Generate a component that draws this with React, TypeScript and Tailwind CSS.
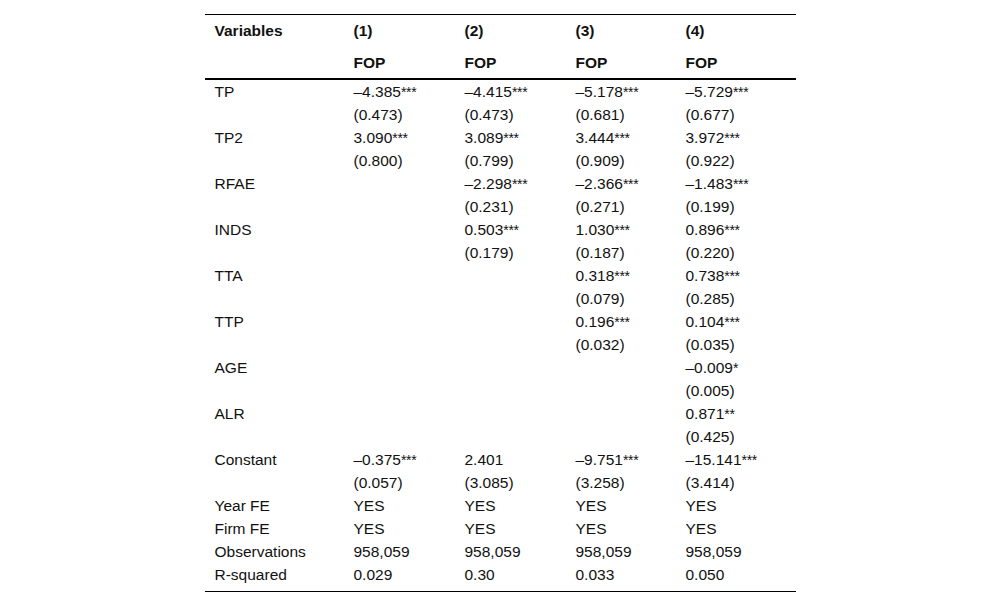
const rows: { label: string; cells: string[]; se?: string[] }[] = [
  { label: "TP", cells: ["–4.385***", "–4.415***", "–5.178***", "–5.729***"], se: ["(0.473)", "(0.473)", "(0.681)", "(0.677)"] },
  { label: "TP2", cells: ["3.090***", "3.089***", "3.444***", "3.972***"], se: ["(0.800)", "(0.799)", "(0.909)", "(0.922)"] },
  { label: "RFAE", cells: ["", "–2.298***", "–2.366***", "–1.483***"], se: ["", "(0.231)", "(0.271)", "(0.199)"] },
  { label: "INDS", cells: ["", "0.503***", "1.030***", "0.896***"], se: ["", "(0.179)", "(0.187)", "(0.220)"] },
  { label: "TTA", cells: ["", "", "0.318***", "0.738***"], se: ["", "", "(0.079)", "(0.285)"] },
  { label: "TTP", cells: ["", "", "0.196***", "0.104***"], se: ["", "", "(0.032)", "(0.035)"] },
  { label: "AGE", cells: ["", "", "", "–0.009*"], se: ["", "", "", "(0.005)"] },
  { label: "ALR", cells: ["", "", "", "0.871**"], se: ["", "", "", "(0.425)"] },
  { label: "Constant", cells: ["–0.375***", "2.401", "–9.751***", "–15.141***"], se: ["(0.057)", "(3.085)", "(3.258)", "(3.414)"] },
  { label: "Year FE", cells: ["YES", "YES", "YES", "YES"] },
  { label: "Firm FE", cells: ["YES", "YES", "YES", "YES"] },
  { label: "Observations", cells: ["958,059", "958,059", "958,059", "958,059"] },
  { label: "R-squared", cells: ["0.029", "0.30", "0.033", "0.050"] },
];

const cols = "grid grid-cols-[140px_111px_111px_110px_119px]";

function Value({ text }: { text: string }) {
  const m = text.match(/^(.*?)(\*+)$/);
  if (!m) return <>{text}</>;
  return (
    <>
      {m[1]}
      <span className="text-[14px] tracking-[-0.3px]">{m[2]}</span>
    </>
  );
}

function Line({ label, cells }: { label: string; cells: string[] }) {
  return (
    <div className={`${cols} h-[23px] items-center`}>
      <div className="pl-[10px]">{label}</div>
      {cells.map((c, i) => (
        <div key={i} className="pl-[9px]">
          <Value text={c} />
        </div>
      ))}
    </div>
  );
}

export default function App() {
  return (
    <div className="min-h-[607px] bg-white pt-[14px] font-['Liberation_Sans',Arial,sans-serif] text-[15.5px] text-[#111]">
      <div className="mx-auto w-[591px] border-y border-black pb-[5px]">
        <div className="border-b-2 border-black font-bold">
          <div className={`${cols} h-[32px] items-center`}>
            <div className="pl-[10px]">Variables</div>
            <div className="pl-[9px]">(1)</div>
            <div className="pl-[9px]">(2)</div>
            <div className="pl-[9px]">(3)</div>
            <div className="pl-[9px]">(4)</div>
          </div>
          <div className={`${cols} h-[31px] items-center`}>
            <div />
            <div className="pl-[9px]">FOP</div>
            <div className="pl-[9px]">FOP</div>
            <div className="pl-[9px]">FOP</div>
            <div className="pl-[9px]">FOP</div>
          </div>
        </div>
        {rows.map((r) => (
          <div key={r.label}>
            <Line label={r.label} cells={r.cells} />
            {r.se && <Line label="" cells={r.se} />}
          </div>
        ))}
      </div>
    </div>
  );
}
